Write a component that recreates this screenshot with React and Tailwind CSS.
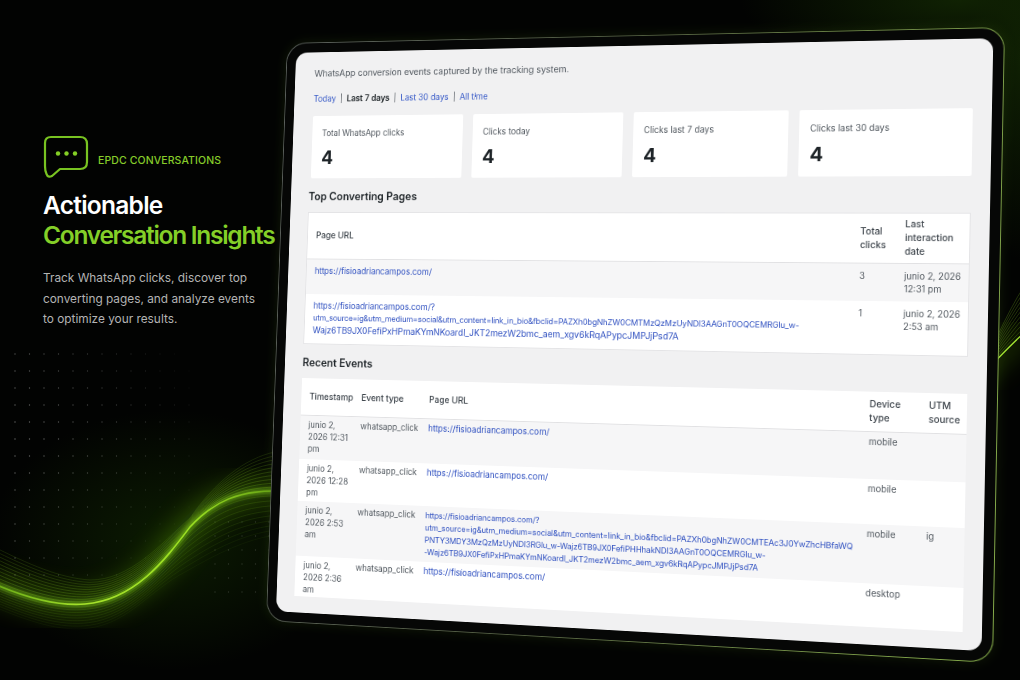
import React from "react";

const lerpPoints = (a, b, t) => a.map((p, i) => [p[0] + (b[i][0] - p[0]) * t, p[1] + (b[i][1] - p[1]) * t]);

const toPath = (pts) => {
  const [start, ...rest] = pts;
  let d = `M${start[0]},${start[1]}`;
  for (let i = 0; i < rest.length; i += 3) {
    d += ` C${rest[i][0]},${rest[i][1]} ${rest[i + 1][0]},${rest[i + 1][1]} ${rest[i + 2][0]},${rest[i + 2][1]}`;
  }
  return d;
};

const main = [[-10, 582], [30, 600], [60, 606], [85, 604], [135, 600], [165, 560], [190, 527], [215, 500], [240, 491], [275, 491]];
const upper = [[-10, 545], [30, 565], [60, 578], [90, 580], [130, 580], [160, 545], [190, 518], [215, 482], [245, 458], [275, 452]];
const lower = [[-10, 605], [30, 622], [60, 632], [90, 628], [130, 622], [150, 590], [185, 572], [220, 552], [245, 540], [275, 535]];

const rightMain = [[975, 380], [990, 368], [1005, 350], [1025, 332]];
const rightUpper = [[975, 380], [990, 355], [1005, 315], [1025, 285]];

const Wave = () => (
  <svg className="absolute inset-0" width="1020" height="680" viewBox="0 0 1020 680" fill="none">
    <defs>
      <filter id="blurWide" x="-20%" y="-20%" width="140%" height="140%">
        <feGaussianBlur stdDeviation="13" />
      </filter>
      <filter id="blurMid" x="-20%" y="-20%" width="140%" height="140%">
        <feGaussianBlur stdDeviation="2.5" />
      </filter>
      <linearGradient id="waveFade" x1="0" y1="0" x2="275" y2="0" gradientUnits="userSpaceOnUse">
        <stop offset="0" stopColor="#7ec81c" stopOpacity="0.7" />
        <stop offset="0.3" stopColor="#a6e22c" />
        <stop offset="0.7" stopColor="#9ade22" />
        <stop offset="1" stopColor="#6fae18" stopOpacity="0.8" />
      </linearGradient>
    </defs>
    {Array.from({ length: 14 }).map((_, r) =>
      Array.from({ length: 13 }).map((_, c) => {
        const x = 15 + c * 14.5;
        const y = 354 + r * 17;
        const o = Math.max(0, 0.42 - (c / 13) * 0.34 - Math.abs(r - 5) * 0.018);
        return <circle key={`${r}-${c}`} cx={x} cy={y} r="0.7" fill="#ffffff" opacity={o} />;
      })
    )}
    {Array.from({ length: 6 }).map((_, r) =>
      Array.from({ length: 5 }).map((_, c) => (
        <circle key={`b${r}-${c}`} cx={215 + c * 13.5} cy={522 + r * 14} r="0.7" fill="#ffffff" opacity="0.16" />
      ))
    )}
    <path d={toPath(main)} stroke="#6fc010" strokeWidth="20" opacity="0.42" filter="url(#blurWide)" />
    <path d={toPath(main)} stroke="#86d414" strokeWidth="4" opacity="0.8" filter="url(#blurMid)" />
    {Array.from({ length: 10 }).map((_, i) => (
      <path key={i} d={toPath(lerpPoints(main, upper, (i + 1) / 10))} stroke="#8acb22" strokeWidth="0.6" opacity={0.42 - i * 0.02} />
    ))}
    {Array.from({ length: 9 }).map((_, i) => (
      <path key={i} d={toPath(lerpPoints(main, lower, (i + 1) / 9))} stroke="#79b81e" strokeWidth="0.5" opacity={0.36 - i * 0.03} />
    ))}
    <path d={toPath(main)} stroke="url(#waveFade)" strokeWidth="1.6" />
    <path d={toPath(rightMain)} stroke="#6fc010" strokeWidth="12" opacity="0.35" filter="url(#blurWide)" />
    {Array.from({ length: 9 }).map((_, i) => (
      <path key={i} d={toPath(lerpPoints(rightMain, rightUpper, (i + 1) / 9))} stroke="#7ab820" strokeWidth="0.6" opacity="0.45" />
    ))}
    <path d={toPath(rightMain)} stroke="#a0e030" strokeWidth="1.4" />
  </svg>
);

const Logo = () => (
  <svg width="46" height="44" viewBox="0 0 46 44" fill="none">
    <path
      d="M8 2 H37 Q44 2 44 9 V27 Q44 34 37 34 H17 L9 41 Q5 43 3.5 39 Q2 36 2 31 V8 Q2 2 8 2 Z"
      stroke="#78c321"
      strokeWidth="2.2"
      strokeLinejoin="round"
    />
    <circle cx="15" cy="18.5" r="2.2" fill="#84cf25" />
    <circle cx="23.5" cy="18.5" r="2.2" fill="#84cf25" />
    <circle cx="32" cy="18.5" r="2.2" fill="#84cf25" />
  </svg>
);

const StatCard = ({ label, value }) => (
  <div className="bg-white rounded-[2px] px-[12px] pt-[13px] h-[74px]">
    <p className="text-[9.7px] leading-[16px] text-[#50575e]">{label}</p>
    <p className="mt-[7px] text-[22px] leading-[26px] font-bold text-[#1d2327]">{value}</p>
  </div>
);

const thClass = "px-[10px] text-left font-medium text-[10.1px] leading-[15px] text-[#3c434a] align-middle border-b border-[#e1e1e3]";
const tdClass = "px-[10px] pt-[7px] text-[9.7px] leading-[14px] text-[#50575e] align-top";
const eventTdClass = "px-[10px] pt-[4px] text-[9.7px] leading-[14px] text-[#50575e] align-top";

const SHORT_URL = "https://fisioadriancampos.com/";

const events = [
  { time: "junio 2, 2026 12:31 pm", url: [SHORT_URL], device: "mobile", utm: "", rowClass: "bg-[#f6f6f7] h-[52px]" },
  { time: "junio 2, 2026 12:28 pm", url: [SHORT_URL], device: "mobile", utm: "", rowClass: "bg-white h-[49px]" },
  {
    time: "junio 2, 2026 2:53 am",
    url: [
      "https://fisioadriancampos.com/?",
      "utm_source=ig&utm_medium=social&utm_content=link_in_bio&fbclid=PAZXh0bgNhZW0CMTEAc3J0YwZhcHBfaWQ",
      "PNTY3MDY3MzQzMzUyNDI3RGlu_w-Wajz6TB9JX0FefiPHHhakNDI3AAGnT0OQCEMRGlu_w-",
      "-Wajz6TB9JX0FefiPxHPmaKYmNKoardl_JKT2mezW2bmc_aem_xgv6kRqAPypcJMPJjPsd7A",
    ],
    compact: true,
    device: "mobile",
    utm: "ig",
    rowClass: "bg-[#f6f6f7] h-[64px]",
  },
  { time: "junio 2, 2026 2:36 am", url: [SHORT_URL], device: "desktop", utm: "", rowClass: "bg-white h-[47px]" },
];

// the long query strings run narrower than the plain links
const UrlLines = ({ lines, compact }) => (
  <div className="text-[#2f50c0] leading-[14px] whitespace-nowrap">
    {lines.map((l) => (
      <div
        key={l}
        className={
          compact
            ? "text-[9px] tracking-[-0.1px]"
            : l.startsWith("utm")
              ? "text-[9.1px] tracking-[-0.1px]"
              : l.startsWith("Wajz")
                ? "text-[10.1px]"
                : "text-[9.7px]"
        }
      >
        {l}
      </div>
    ))}
  </div>
);

const TopPagesTable = () => (
  <table className="w-full table-fixed bg-white border-collapse">
    <thead>
      <tr className="h-[54px]">
        <th className={`${thClass} w-[634px]`}>Page URL</th>
        <th className={`${thClass} w-[44px] !px-[6px]`}>Total clicks</th>
        <th className={`${thClass} !pr-0`}>Last interaction date</th>
      </tr>
    </thead>
    <tbody>
      <tr className="bg-[#f6f6f7] h-[42px]">
        <td className={tdClass}><UrlLines lines={[SHORT_URL]} /></td>
        <td className={`${tdClass} !px-[6px]`}>3</td>
        <td className={`${tdClass} !pr-0`}>junio 2, 2026 12:31 pm</td>
      </tr>
      <tr className="h-[58px]">
        <td className={tdClass}>
          <UrlLines
            lines={[
              "https://fisioadriancampos.com/?",
              "utm_source=ig&utm_medium=social&utm_content=link_in_bio&fbclid=PAZXh0bgNhZW0CMTMzQzMzUyNDI3AAGnT0OQCEMRGlu_w-",
              "Wajz6TB9JX0FefiPxHPmaKYmNKoardl_JKT2mezW2bmc_aem_xgv6kRqAPypcJMPJjPsd7A",
            ]}
          />
        </td>
        <td className={`${tdClass} !px-[6px]`}>1</td>
        <td className={`${tdClass} !pr-0`}>junio 2, 2026 2:53 am</td>
      </tr>
    </tbody>
  </table>
);

const EventsTable = () => (
  <table className="w-full table-fixed bg-white border-collapse">
    <thead>
      <tr className="h-[43px]">
        <th className={`${thClass} w-[64px] !pr-0`}>Timestamp</th>
        <th className={`${thClass} w-[82px] !pr-0`}>Event type</th>
        <th className={`${thClass} w-[499px]`}>Page URL</th>
        <th className={`${thClass} w-[63px]`}>Device type</th>
        <th className={thClass}>UTM source</th>
      </tr>
    </thead>
    <tbody>
      {events.map((e) => (
        <tr key={e.time} className={e.rowClass}>
          <td className={`${eventTdClass} !pr-[2px]`}>{e.time}</td>
          <td className={`${eventTdClass} !pr-0`}>whatsapp_click</td>
          <td className={eventTdClass}><UrlLines lines={e.url} compact={e.compact} /></td>
          <td className={eventTdClass}>{e.device}</td>
          <td className={eventTdClass}>{e.utm}</td>
        </tr>
      ))}
    </tbody>
  </table>
);

const Screen = () => (
  <div className="h-full bg-[#f1f1f2] rounded-[14px] pl-[24px] pr-[20px] pt-[18px] overflow-hidden font-['Inter',sans-serif]">
    <p className="text-[10.4px] leading-[16px] text-[#50575e]">WhatsApp conversion events captured by the tracking system.</p>
    <div className="mt-[14px] flex items-center gap-[5px] text-[9.7px] leading-[16px] text-[#50575e]">
      <span className="text-[#3a5cc8]">Today</span>
      <span>|</span>
      <span className="font-semibold text-[#1d2327]">Last 7 days</span>
      <span>|</span>
      <span className="text-[#3a5cc8]">Last 30 days</span>
      <span>|</span>
      <span className="text-[#3a5cc8]">All time</span>
    </div>
    <div className="mt-[12px] grid grid-cols-[184px_176px_174px_1fr] gap-[12px]">
      <StatCard label="Total WhatsApp clicks" value="4" />
      <StatCard label="Clicks today" value="4" />
      <StatCard label="Clicks last 7 days" value="4" />
      <StatCard label="Clicks last 30 days" value="4" />
    </div>
    <h2 className="mt-[12px] -ml-[2px] text-[12.5px] leading-[20px] font-semibold text-[#1d2327]">Top Converting Pages</h2>
    <div className="mt-[8px] -ml-[2px] border border-[#e4e4e6]">
      <TopPagesTable />
    </div>
    <h2 className="mt-[12px] -ml-[2px] text-[12.5px] leading-[20px] font-semibold text-[#1d2327]">Recent Events</h2>
    <div className="mt-[8px] -ml-[2px]">
      <EventsTable />
    </div>
  </div>
);

export default function App() {
  return (
    <div className="relative w-[1020px] h-[680px] overflow-hidden bg-[#020302] bg-[radial-gradient(ellipse_220px_70px_at_960px_0px,#102203,transparent),radial-gradient(ellipse_50px_200px_at_1020px_60px,#0f2003,transparent),radial-gradient(ellipse_180px_130px_at_170px_540px,#0c1c02,transparent)] font-['Inter',sans-serif]">
      <Wave />

      <div className="relative w-[270px] pl-[43px] pt-[135px]">
        <div className="flex items-center gap-[9px]">
          <Logo />
          <span className="mt-[7px] text-[10.5px] font-medium tracking-[0.01em] text-[#86cc2a]">EPDC CONVERSATIONS</span>
        </div>
        <h1 className="mt-[11px] text-[24.5px] leading-[30px] font-semibold whitespace-nowrap">
          <span className="block tracking-[-0.03em] text-white">Actionable</span>
          <span className="block tracking-[-0.052em] text-[#84cf28]">Conversation Insights</span>
        </h1>
        <p className="mt-[18px] text-[11.85px] leading-[20.5px] text-[#b4b4b4] whitespace-nowrap">
          Track WhatsApp clicks, discover top
          <br />
          converting pages, and analyze events
          <br />
          to optimize your results.
        </p>
      </div>

      {/* tablet sits on the canvas with its own perspective */}
      <div className="absolute left-0 top-0 w-[824px] h-[684px] origin-top-left rounded-[24px] p-px bg-[linear-gradient(100deg,#5a5f5c_0%,#4f5a3f_45%,#86ad4a_100%)] shadow-[0_0_14px_rgba(120,190,40,0.12)] [transform:matrix3d(0.76125,-0.022376,0,-0.00010956,-0.036095,0.83244,0,-0.000020278,0,0,1,0,287,43,0,1)]">
        <div className="h-full rounded-[23px] bg-[#060706] p-[11px]">
          <Screen />
        </div>
      </div>
    </div>
  );
}
